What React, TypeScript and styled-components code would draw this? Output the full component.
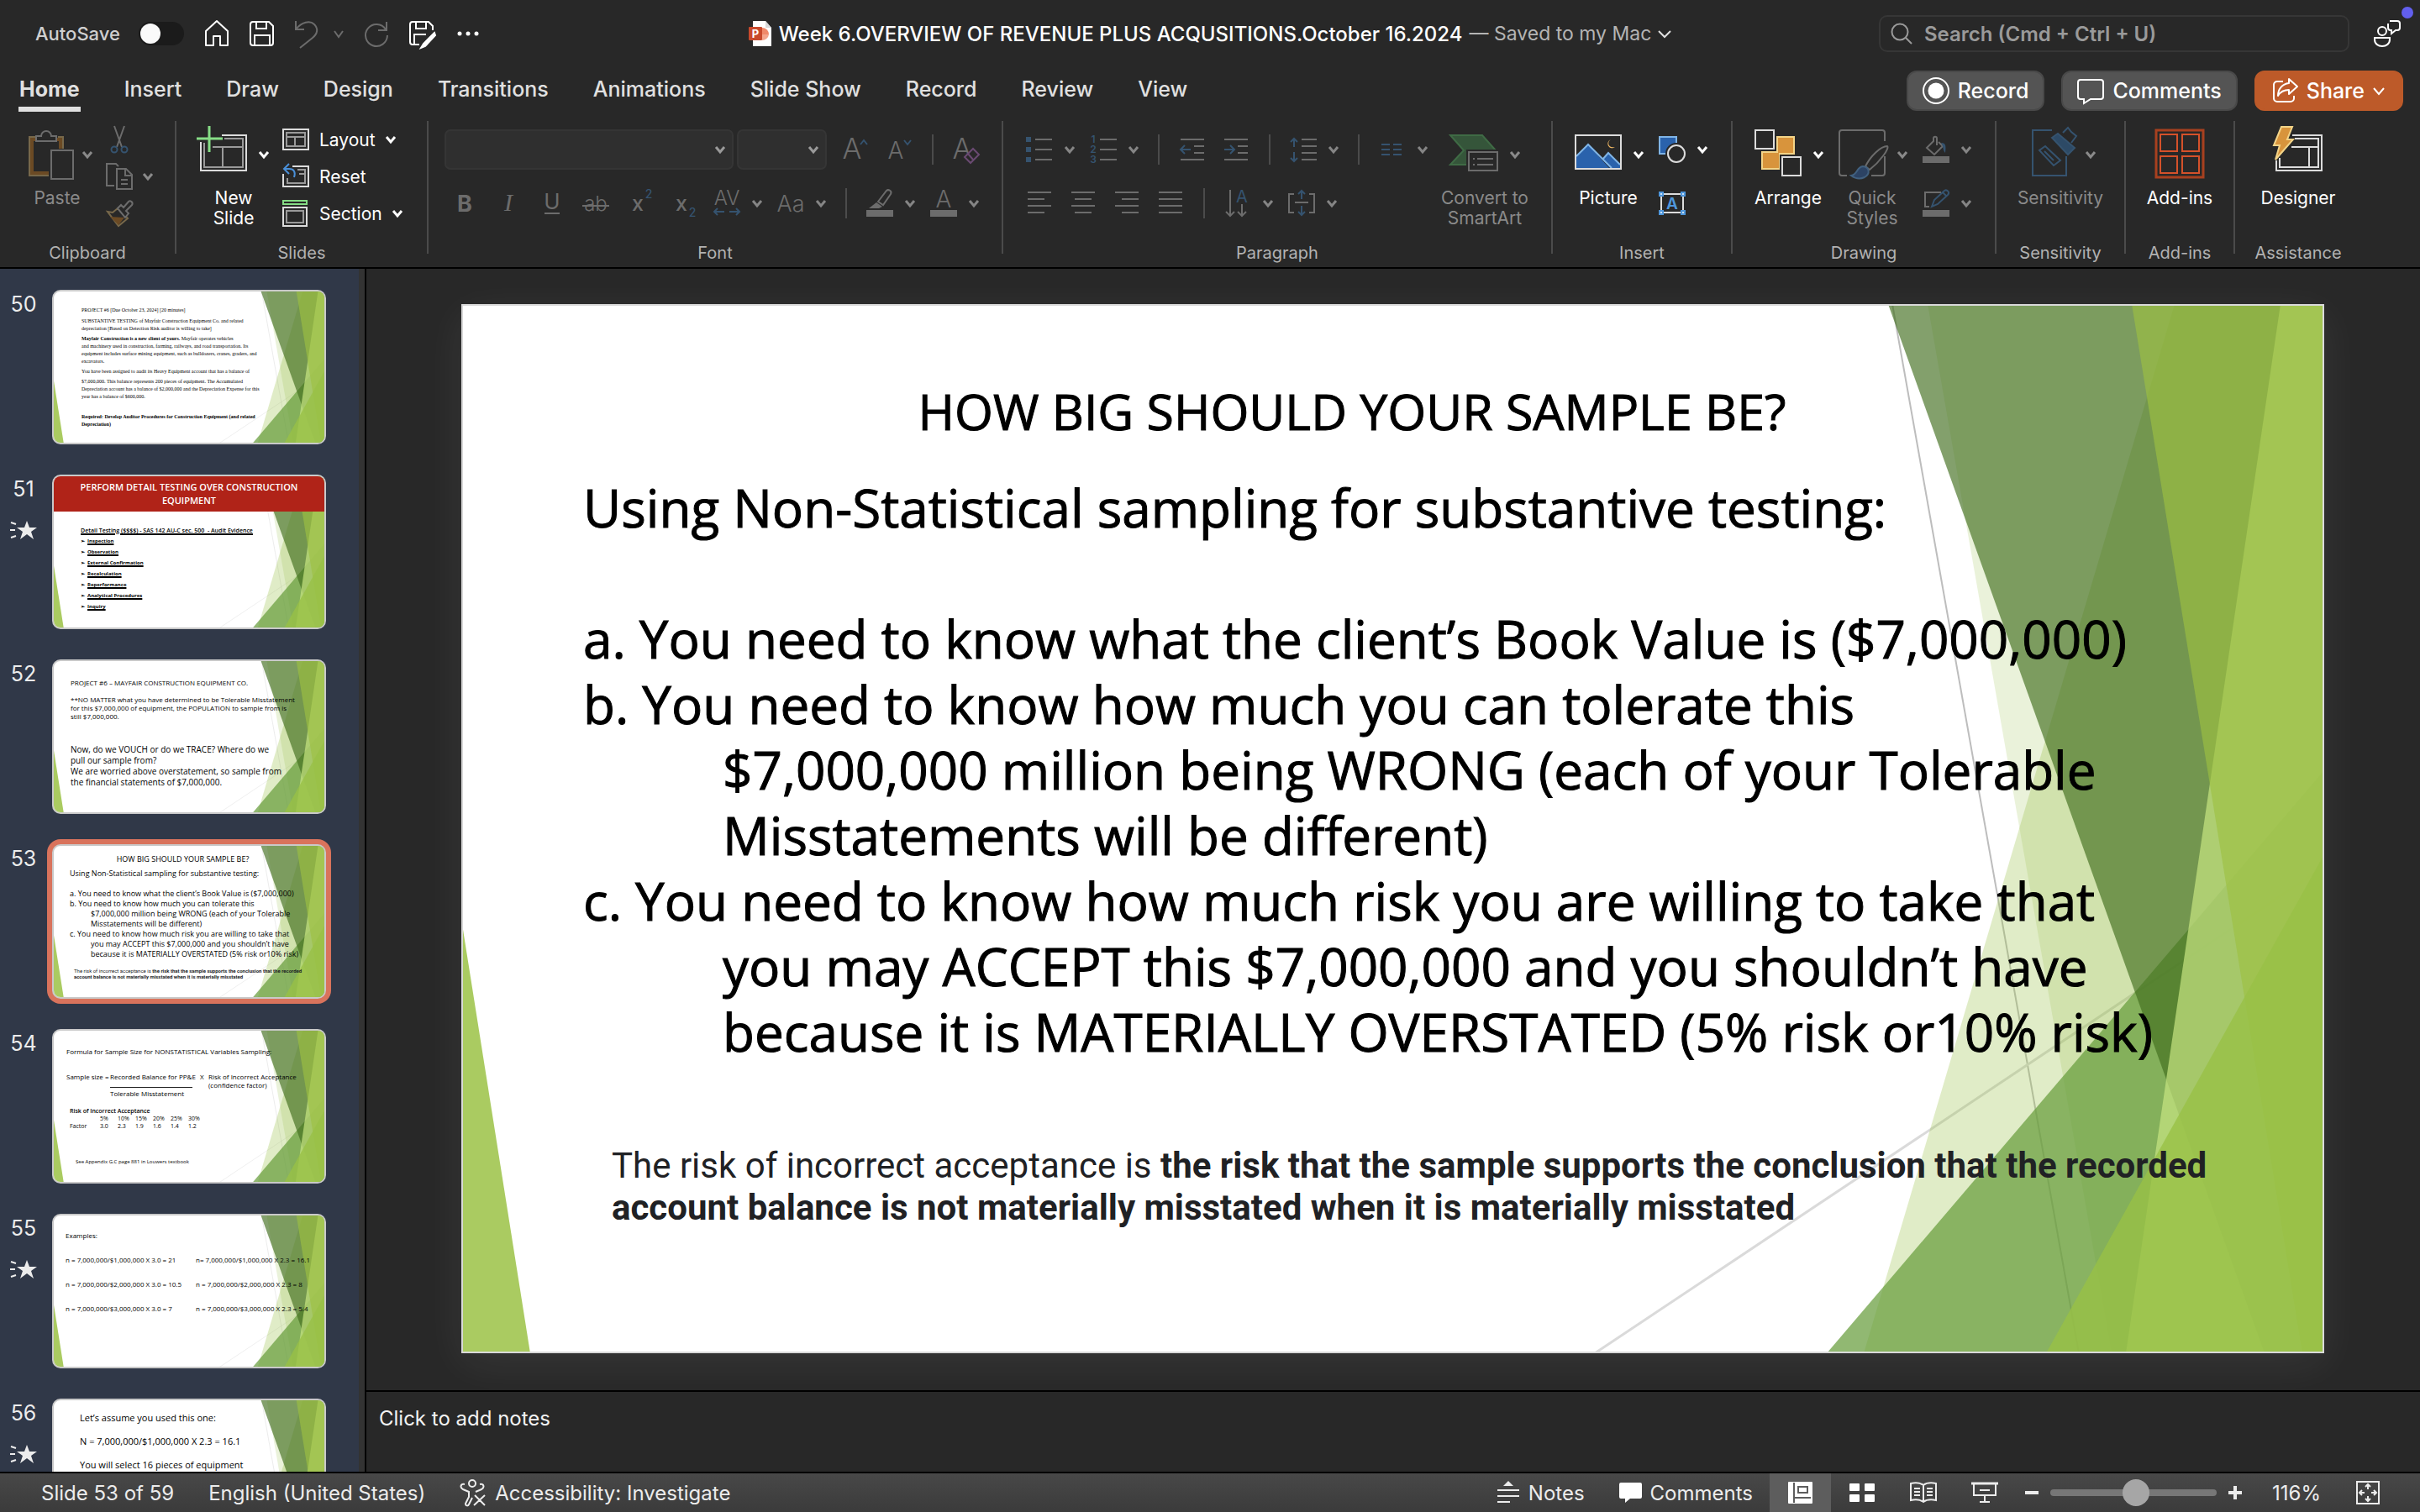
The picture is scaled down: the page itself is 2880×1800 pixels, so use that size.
import React from "react";
import styled, { createGlobalStyle, css } from "styled-components";

const ui = `Inter, "Liberation Sans", sans-serif`;
const slideFont = `"Open Sans", "Noto Sans", sans-serif`;

const c = {
  bg: "#282828",
  text: "#e0e0e0",
  label: "#b2b2b2",
  dim: "#8a8a8a",
  line: "#6c6c6c",
  soft: "#9a9a9a",
  white: "#dcdcdc",
  blueDim: "#35536f",
  rule: "#4b4b4b",
};

const GlobalStyle = createGlobalStyle`
  *, *::before, *::after { box-sizing: border-box; }
  body { margin: 0; background: ${c.bg}; color: ${c.text}; font-family: ${ui}; }
  button, input, select, textarea { font-family: inherit; color: inherit; margin: 0; }
  button { background: none; border: 0; padding: 0; }
  svg { display: block; overflow: visible; flex: none; }
  h1, h2, p, ol, ul { margin: 0; padding: 0; font-weight: inherit; }
  ol, ul { list-style: none; }
`;

const Shell = styled.div`
  height: 100vh;
  display: grid;
  grid-template-rows: auto auto auto minmax(0, 1fr) auto;
`;

/* ---------- title bar ---------- */
const TitleBar = styled.header`
  height: 80px;
  padding: 0 22px;
  display: grid;
  grid-template-columns: 1fr auto 1fr;
  align-items: center;
`;
const QuickAccess = styled.div`
  display: flex;
  align-items: center;
  gap: 24px;
  padding-left: 20px;
`;
const AutoSave = styled.label`
  display: flex;
  align-items: center;
  gap: 22px;
  font-size: 22px;
  font-weight: 500;
  color: #cfcfcf;
`;
const Toggle = styled.input`
  appearance: none;
  width: 54px;
  height: 28px;
  border-radius: 14px;
  background: #1b1b1b;
  padding: 2px;
  &::before {
    content: "";
    display: block;
    width: 24px;
    height: 24px;
    border-radius: 50%;
    background: #fafafa;
  }
`;
const IconButton = styled.button<{ $dim?: boolean }>`
  display: flex;
  align-items: center;
  gap: 18px;
  color: ${(p) => (p.$dim ? c.line : "#fff")};
`;
const DocTitle = styled.div`
  display: flex;
  align-items: center;
  gap: 8px;
  font-size: 24px;
  white-space: nowrap;
`;
const DocName = styled.h1`
  font-size: 24px;
  font-weight: 500;
  color: #fff;
`;
const DocState = styled.span`
  font-size: 23px;
  color: #b4b4b4;
`;
const TitleRight = styled.div`
  display: flex;
  justify-content: flex-end;
  align-items: center;
  gap: 28px;
`;
const SearchBox = styled.label`
  flex: 0 1 560px;
  height: 44px;
  padding: 0 12px;
  display: flex;
  align-items: center;
  gap: 14px;
  border: 2px solid #363636;
  border-radius: 10px;
  color: ${c.soft};
`;
const SearchInput = styled.input`
  flex: 1;
  min-width: 0;
  border: 0;
  padding: 0;
  background: none;
  font-size: 24px;
  font-weight: 600;
  &::placeholder {
    color: ${c.soft};
    opacity: 1;
  }
`;
const Presence = styled.button`
  position: relative;
  color: #fff;
`;
const PresenceDot = styled.span`
  position: absolute;
  top: -16px;
  right: -14px;
  width: 14px;
  height: 14px;
  border-radius: 50%;
  background: #625fee;
`;

/* ---------- tabs ---------- */
const TabRow = styled.div`
  height: 56px;
  padding: 0 20px 0 22px;
  display: flex;
  justify-content: space-between;
  align-items: center;
`;
const Tabs = styled.nav`
  display: flex;
  gap: 51px;
`;
const Tab = styled.a<{ $on?: boolean }>`
  padding: 8px 1px 6px;
  font-size: 25px;
  line-height: 30px;
  font-weight: ${(p) => (p.$on ? 700 : 500)};
  color: ${c.text};
  text-decoration: none;
  border-bottom: 6px solid transparent;
  ${(p) =>
    p.$on &&
    css`
      border-color: #e0e0e0;
    `}
`;
const Actions = styled.div`
  display: flex;
  gap: 20px;
`;
const Action = styled.button<{ $primary?: boolean }>`
  height: 48px;
  padding: 0 ${(p) => (p.$primary ? 20 : 17)}px;
  display: flex;
  align-items: center;
  gap: 10px;
  border: 2px solid ${(p) => (p.$primary ? "#bd5a29" : "#494949")};
  border-radius: 12px;
  background: ${(p) => (p.$primary ? "#bd5a29" : "#545454")};
  color: #fff;
  font-size: 25px;
  font-weight: 500;
`;

/* ---------- ribbon ---------- */
const RibbonBar = styled.section`
  height: 184px;
  padding-top: 8px;
  display: flex;
  align-items: flex-start;
  border-bottom: 2px solid #000;
`;
const Group = styled.div<{ $w: number }>`
  min-width: ${(p) => p.$w}px;
  height: 158px;
  border-right: 2px solid ${c.rule};
  display: flex;
  flex-direction: column;
  justify-content: space-between;
  &:last-child {
    border-right-color: transparent;
  }
`;
const GroupBody = styled.div<{ $left?: number; $gap?: number; $center?: boolean }>`
  display: flex;
  padding-left: ${(p) => p.$left ?? 0}px;
  gap: ${(p) => p.$gap ?? 0}px;
  justify-content: ${(p) => (p.$center ? "center" : "flex-start")};
`;
const GroupLabel = styled.div`
  font-size: 20px;
  line-height: 24px;
  margin-bottom: -11px;
  text-align: center;
  color: ${c.label};
`;
const BigButton = styled.button<{ $dim?: boolean }>`
  min-width: 100px;
  display: flex;
  flex-direction: column;
  align-items: center;
  color: ${(p) => (p.$dim ? c.dim : "#fff")};
  font-size: 21px;
  line-height: 24px;
`;
const BigIcon = styled.span`
  height: 80px;
  display: flex;
  align-items: center;
  gap: 12px;
`;
const Stack = styled.div`
  display: grid;
  grid-auto-rows: 44px;
`;
const RowButton = styled.button<{ $dim?: boolean }>`
  display: flex;
  align-items: center;
  gap: 12px;
  color: ${(p) => (p.$dim ? c.dim : "#fff")};
  font-size: 21px;
`;
const Rows = styled.div`
  padding-top: 10px;
  display: grid;
  grid-auto-rows: 48px;
  row-gap: 16px;
`;
const ToolRow = styled.div<{ $left?: number }>`
  display: flex;
  align-items: center;
  gap: 18px;
  padding-left: ${(p) => p.$left ?? 0}px;
`;
const Cluster = styled.div<{ $gap: number }>`
  display: flex;
  align-items: center;
  gap: ${(p) => p.$gap}px;
`;
const ToolButton = styled.button`
  display: flex;
  align-items: center;
  gap: 14px;
  color: ${c.line};
`;
const Divider = styled.span`
  width: 2px;
  height: 36px;
  margin: 0 5px;
  background: ${c.rule};
`;
const Combo = styled.span<{ $w: number }>`
  width: ${(p) => p.$w}px;
  height: 48px;
  padding-right: 8px;
  display: grid;
  align-items: center;
  justify-items: end;
  border: 2px solid #353535;
  border-radius: 7px;
  background: #2f2f2f;
  color: ${c.soft};
  & > * {
    grid-area: 1 / 1;
  }
`;
const ComboSelect = styled.select`
  appearance: none;
  width: 100%;
  height: 100%;
  border: 0;
  background: none;
`;

/* ---------- workspace ---------- */
const Workspace = styled.div`
  display: grid;
  grid-template-columns: 436px minmax(0, 1fr);
  min-height: 0;
`;
const Sidebar = styled.aside`
  overflow: hidden;
  background: #303848;
  border-right: 2px solid #000;
  box-shadow: inset -7px 0 0 #333;
`;
const ThumbList = styled.ol`
  padding: 25px 0 0 8px;
  display: flex;
  flex-direction: column;
  gap: 36px;
`;
const ThumbItem = styled.li`
  display: grid;
  grid-template-columns: 40px 326px;
  column-gap: 14px;
`;
const ThumbMeta = styled.div`
  display: flex;
  flex-direction: column;
  align-items: center;
  gap: 20px;
  color: #ececec;
  font-size: 25px;
  line-height: 34px;
`;
const Thumb = styled.a<{ $on?: boolean }>`
  height: 184px;
  display: grid;
  overflow: hidden;
  border: 2px solid #c9c9c9;
  border-radius: 10px;
  background: #fff;
  color: #000;
  text-decoration: none;
  font-family: ${slideFont};
  box-shadow: ${(p) => (p.$on ? "0 0 0 6px #d9735c" : "none")};
  & > * {
    grid-area: 1 / 1;
    min-width: 0;
  }
`;
const Layer = styled.div<{ $x?: number; $y?: number; $size?: number; $lh?: number; $family?: string }>`
  z-index: 1;
  padding: ${(p) => p.$y ?? 0}px 0 0 ${(p) => p.$x ?? 0}px;
  font-size: ${(p) => p.$size ?? 8}px;
  line-height: ${(p) => p.$lh ?? 10}px;
  ${(p) => p.$family && `font-family: ${p.$family};`}
  white-space: pre;
`;
const Para = styled.p<{ $top?: number; $left?: number; $size?: number; $lh?: number; $bold?: boolean }>`
  margin-top: ${(p) => p.$top ?? 0}px;
  padding-left: ${(p) => p.$left ?? 0}px;
  ${(p) => p.$size && `font-size: ${p.$size}px;`}
  ${(p) => p.$lh && `line-height: ${p.$lh}px;`}
  font-weight: ${(p) => (p.$bold ? 700 : "inherit")};
`;
const RedHeader = styled.div`
  height: 42px;
  padding-top: 5px;
  background: #b02318;
  color: #fff;
  font-size: 11px;
  line-height: 16px;
  font-weight: 600;
  text-align: center;
`;
const TopicList = styled.ul`
  padding: 16px 0 0 32px;
  font-size: 6px;
  line-height: 13px;
  font-weight: 700;
`;
const Topic = styled.li<{ $head?: boolean }>`
  ${(p) => p.$head && "font-size: 7px; font-weight: 600;"}
  display: flex;
  gap: 3px;
`;
const Underlined = styled.span`
  text-decoration: underline 2px;
  text-underline-offset: 1px;
`;
const Formula = styled.div`
  margin-top: 20px;
  display: grid;
  grid-template-columns: 52px 107px 10px auto;
`;
const Fraction = styled.span`
  display: grid;
  justify-items: start;
`;
const FractionBar = styled.span`
  width: 98px;
  height: 8px;
  margin-bottom: 2px;
  border-bottom: 1px solid #222;
`;
const FactorTable = styled.table`
  margin: 11px 0 0 4px;
  border-collapse: collapse;
  font-size: 7px;
  line-height: 9px;
  tr {
    height: 9px;
  }
  td,
  th {
    padding: 0;
    width: 21px;
    text-align: left;
    font-weight: 400;
  }
  th:first-child {
    width: 36px;
  }
  caption {
    text-align: left;
    font-weight: 600;
  }
`;
const Pairs = styled.div`
  display: grid;
  grid-template-columns: 155px auto;
`;

const MainArea = styled.main`
  display: grid;
  grid-template-rows: minmax(0, 1fr) auto;
  min-height: 0;
`;
const Stage = styled.div`
  padding: 42px 114px 0 113px;
  overflow: hidden;
`;
const Slide = styled.article`
  width: 100%;
  aspect-ratio: 2217 / 1249;
  display: grid;
  overflow: hidden;
  background: #fff;
  color: #000;
  font-family: ${slideFont};
  outline: 2px solid #d9d9d9;
  outline-offset: -2px;
  box-shadow: 0 12px 48px rgba(255, 255, 255, 0.07);
  & > * {
    grid-area: 1 / 1;
    min-width: 0;
    min-height: 0;
  }
`;
const SlideText = styled.div`
  z-index: 1;
  padding: 88px 0 0 145px;
  font-size: 62px;
  line-height: 78px;
  white-space: pre;
`;
const SlideTitle = styled.h2`
  width: 1830px;
  font-size: 59px;
  text-align: center;
  -webkit-text-stroke: 1px #000;
`;
const SlideBody = styled.div`
  margin-top: 37px;
  -webkit-text-stroke: 1px #000;
`;
const SlideLine = styled.p<{ $indent?: boolean }>`
  min-height: 78px;
  padding-left: ${(p) => (p.$indent ? 166 : 0)}px;
`;
const Footnote = styled.p`
  margin: 96px 0 0 34px;
  font-family: Roboto, sans-serif;
  font-size: 42px;
  line-height: 50px;
  color: #202124;
`;
const Notes = styled.textarea`
  display: block;
  width: 100%;
  height: 97px;
  padding: 16px 15px;
  border: 0;
  border-top: 2px solid #000;
  resize: none;
  background: ${c.bg};
  font-size: 24px;
  line-height: 32px;
  &::placeholder {
    color: #f2f2f2;
    opacity: 1;
  }
`;

/* ---------- status bar ---------- */
const StatusBar = styled.footer`
  height: 48px;
  display: flex;
  justify-content: space-between;
  align-items: stretch;
  border-top: 2px solid #000;
  background: linear-gradient(#484848, #3b3b3b);
  font-size: 24px;
  color: #ececec;
`;
const StatusSide = styled.div<{ $left?: boolean }>`
  display: flex;
  align-items: center;
  gap: ${(p) => (p.$left ? 41 : 0)}px;
  padding: ${(p) => (p.$left ? "0 0 0 49px" : "0 48px 0 0")};
  white-space: nowrap;
`;
const StatusButton = styled.button<{ $right?: number }>`
  height: 100%;
  display: flex;
  align-items: center;
  gap: 10px;
  margin-right: ${(p) => p.$right ?? 0}px;
  font-size: 24px;
`;
const ViewButton = styled.button<{ $on?: boolean }>`
  width: 73px;
  height: 100%;
  display: grid;
  place-items: center;
  background: ${(p) => (p.$on ? "#5d5d5d" : "none")};
`;
const Zoom = styled.div`
  display: flex;
  align-items: center;
  gap: 14px;
  margin-left: 12px;
`;
const ZoomRange = styled.input`
  appearance: none;
  width: 198px;
  height: 32px;
  background: none;
  &::-webkit-slider-runnable-track {
    height: 8px;
    border-radius: 4px;
    background: #777;
  }
  &::-webkit-slider-thumb {
    appearance: none;
    width: 32px;
    height: 32px;
    margin-top: -12px;
    border-radius: 50%;
    background: #a6a6a6;
  }
`;
const ZoomValue = styled.button`
  margin: 0 42px 0 36px;
  font-size: 24px;
`;

/* ---------- icons ---------- */
type SvgProps = { w?: number; h?: number; sw?: number; children: React.ReactNode };
const Svg = ({ w = 32, h = 32, sw = 2, children }: SvgProps) => (
  <svg width={w} height={h} viewBox={`0 0 ${w} ${h}`} fill="none" stroke="currentColor" strokeWidth={sw} aria-hidden="true">
    {children}
  </svg>
);
const Big = ({ children }: { children: React.ReactNode }) => (
  <Svg w={60} h={64}>{children}</Svg>
);
const Chevron = ({ color }: { color?: string }) => (
  <Svg w={12} h={8} sw={3}>
    <path d="M1 1l5 6 5-6" stroke={color ?? "currentColor"} />
  </Svg>
);
const ThinChevron = ({ w = 14 }: { w?: number }) => (
  <Svg w={w} h={9} sw={2}>
    <path d={`M1 1l${w / 2 - 1} 7 ${w / 2 - 1}-7`} />
  </Svg>
);
const Glyph = ({ x = 16, y = 24, size = 22, fill = "currentColor", weight = 400, style = "normal", family = ui, children }: any) => (
  <text x={x} y={y} fontSize={size} fill={fill} stroke="none" textAnchor="middle" fontWeight={weight} fontStyle={style} fontFamily={family}>
    {children}
  </text>
);

const HomeIcon = () => (
  <Svg w={30} h={32}><path d="M2 13L15 1l13 12v17H19V19h-8v11H2z" strokeLinejoin="round" /></Svg>
);
const SaveIcon = () => (
  <Svg w={30} h={30}>
    <path d="M4 1h19l5 5v20a3 3 0 0 1-3 3H4a3 3 0 0 1-3-3V4a3 3 0 0 1 3-3z" />
    <path d="M8 1v8h12V1M6 29V17h18v12" />
  </Svg>
);
const SaveEditIcon = () => (
  <Svg w={32} h={32}>
    <path d="M12 29H4a3 3 0 0 1-3-3V5a3 3 0 0 1 3-3h19l5 5v5" />
    <path d="M8 2v8h12V2M6 29V17h14" />
    <path d="M30 15l-13 13-3 5 5-2 12-13z" fill="#fff" />
  </Svg>
);
const UndoIcon = () => (
  <Svg w={28} h={32}><path d="M1 1v10h10M1 11C8 2 18 0 23 5s4 11-2 16L6 33" /></Svg>
);
const RedoIcon = () => (
  <Svg w={30} h={30}><path d="M27 1v10H17M26 10A13 13 0 1 0 28 17" /></Svg>
);
const DotsIcon = () => (
  <Svg w={28} h={8}>
    {[4, 14, 24].map((x) => <circle key={x} cx={x} cy={4} r={2.5} fill="#fff" stroke="none" />)}
  </Svg>
);
const PptIcon = () => (
  <Svg w={28} h={30}>
    <path d="M5 0h15l7 8v22H5z" fill="#fff" stroke="none" />
    <path d="M20 0l7 8h-7z" fill="#d8d8d8" stroke="none" />
    <path d="M16 8a8 8 0 0 1 8 8h-8z" fill="#f0896a" stroke="none" />
    <path d="M24 16a8 8 0 0 1-8 7v-7z" fill="#f4a58c" stroke="none" />
    <rect x={0} y={7} width={16} height={16} rx={1} fill="#c8492c" stroke="none" />
    <Glyph x={8} y={20} size={13} weight={700} fill="#fff">P</Glyph>
  </Svg>
);
const SearchIcon = () => (
  <Svg w={26} h={26}><circle cx={11} cy={11} r={9.5} /><path d="M18 18l7 7" /></Svg>
);
const PresenceIcon = () => (
  <Svg w={34} h={32}>
    <circle cx={11} cy={13} r={5} />
    <path d="M2 21h18v2c0 5-4 8-9 8s-9-3-9-8z" />
    <path d="M20 1h9a3 3 0 0 1 3 3v5a3 3 0 0 1-3 3h-2l-5 4v-4h-1a3 3 0 0 1-3-3V4" />
  </Svg>
);
const RecordIcon = () => (
  <Svg><circle cx={16} cy={16} r={15} /><circle cx={16} cy={16} r={9.5} fill="#fff" stroke="none" /></Svg>
);
const CommentIcon = () => (
  <Svg><path d="M4 3h24a3 3 0 0 1 3 3v17a3 3 0 0 1-3 3H16l-8 5v-5H4a3 3 0 0 1-3-3V6a3 3 0 0 1 3-3z" /></Svg>
);
const ShareIcon = () => (
  <Svg w={30} h={30}>
    <path d="M12 4H5a4 4 0 0 0-4 4v16a4 4 0 0 0 4 4h16a4 4 0 0 0 4-4v-3" />
    <path d="M19 1l10 9-10 9v-5c-6 0-10 2-13 7 0-8 5-14 13-15z" strokeLinejoin="round" />
  </Svg>
);

const PasteIcon = () => (
  <Big>
    <path d="M17 13H11V55H32M43 13h4v12" stroke="#77684a" strokeWidth={6} />
    <path d="M17 14H12V54H32M42 14h4v11" stroke="#6b4a24" strokeWidth={4} />
    <path d="M17 10h6a6 6 0 0 1 12 0h6v6H17z" fill={c.bg} stroke={c.line} />
    <rect x={35} y={27} width={26} height={34} fill={c.bg} stroke={c.line} />
  </Big>
);
const CutIcon = () => (
  <Svg>
    <path d="M10 0l9 25M22 0l-9 25" stroke={c.line} />
    <circle cx={10} cy={28} r={3.5} stroke={c.blueDim} />
    <circle cx={22} cy={28} r={3.5} stroke={c.blueDim} />
  </Svg>
);
const CopyIcon = () => (
  <Svg>
    <path d="M10 27H1V1h11l3 3" stroke={c.line} />
    <path d="M13 7h11l7 7v17H13zM23 7v8h8M18 20h8M18 25h8" stroke={c.line} />
  </Svg>
);
const PainterIcon = () => (
  <Svg>
    <path d="M2 14l6 1 6-5 12 12-11 9z" stroke="#77684a" />
    <path d="M5 20l17 1-7 9z" fill="#6b4a24" stroke="none" />
    <path d="M14 10l4-4 3 3 6-7c2-2 6 1 4 4l-7 7 3 3-4 5z" fill={c.bg} stroke={c.line} />
  </Svg>
);
const NewSlideIcon = () => (
  <Big>
    <path d="M28 9H57V51H3V17" stroke={c.white} />
    <path d="M31 13H53V47H7V18M17 23H53M29 23V47" stroke={c.soft} />
    <path d="M13 -2V29M-2 13H29" stroke="#86dd86" strokeWidth={3} />
  </Big>
);
const LayoutIcon = () => (
  <Svg>
    <rect x={1} y={4} width={30} height={24} stroke={c.white} />
    <path d="M5 8h22v16H5zM5 13h22M15 13v11" stroke={c.soft} />
  </Svg>
);
const ResetIcon = () => (
  <Svg>
    <path d="M12 4H31V28H1V13" stroke={c.white} />
    <path d="M18 8h9v16H6v-6M20 13h7" stroke={c.soft} />
    <path d="M8 1L2 7l6 6M2 7h6c6 0 8 4 6 10" stroke="#4a90d9" />
  </Svg>
);
const SectionIcon = () => (
  <Svg>
    <rect x={1} y={1} width={28} height={4} stroke="#86dd86" />
    <rect x={1} y={9} width={28} height={22} stroke={c.white} />
    <rect x={5} y={13} width={20} height={14} stroke={c.soft} />
  </Svg>
);
const GrowIcon = () => (
  <Svg><Glyph x={12} y={27} size={34} weight={300}>A</Glyph><path d="M22 10l4-5 4 5" stroke={c.blueDim} /></Svg>
);
const ShrinkIcon = () => (
  <Svg><Glyph x={12} y={27} size={28} weight={300}>A</Glyph><path d="M22 5l4 5 4-5" stroke={c.blueDim} /></Svg>
);
const ClearIcon = () => (
  <Svg>
    <Glyph x={11} y={27} size={34} weight={300}>A</Glyph>
    <path d="M14 25l10-10 7 7-10 10z M18 21l6 7" fill={c.bg} stroke="#6a4a72" />
  </Svg>
);
const CharSpaceIcon = () => (
  <Svg>
    <Glyph x={16} y={18} size={24} weight={300}>AV</Glyph>
    <path d="M1 26h12M19 26h12M5 22l-4 4 4 4M27 22l4 4-4 4" stroke={c.blueDim} />
  </Svg>
);
const HighlightIcon = () => (
  <Svg>
    <path d="M14 14L24 1c2-2 7 0 5 4L20 18z" stroke={c.line} />
    <path d="M12 15l7 5-4 2H3z" fill={c.line} stroke="none" />
    <rect x={0} y={24} width={32} height={8} fill={c.line} stroke="none" />
  </Svg>
);
const FontColorIcon = () => (
  <Svg>
    <Glyph x={16} y={21} size={28} weight={300}>A</Glyph>
    <rect x={0} y={24} width={32} height={8} fill={c.line} stroke="none" />
  </Svg>
);
const BulletsIcon = () => (
  <Svg>
    <path d="M11 4h20M11 16h20M11 28h20" />
    {[1, 13, 25].map((y) => <rect key={y} x={0} y={y} width={6} height={6} fill={c.blueDim} stroke="none" />)}
  </Svg>
);
const NumbersIcon = () => (
  <Svg>
    <path d="M12 4h20M12 16h20M12 28h20" />
    {[1, 2, 3].map((n) => <Glyph key={n} x={4} y={n * 12 - 4} size={12} weight={600} fill={c.blueDim}>{n}</Glyph>)}
  </Svg>
);
const IndentIcon = ({ out }: { out?: boolean }) => (
  <Svg>
    <path d="M2 4h28M18 12h12M18 20h12M2 28h28" />
    <path d={out ? "M2 16h12M7 11l-5 5 5 5" : "M2 16h12M9 11l5 5-5 5"} stroke={c.blueDim} />
  </Svg>
);
const SpacingIcon = () => (
  <Svg>
    <path d="M14 4h18M14 12h18M14 20h18M14 28h18" />
    <path d="M5 3v10M5 19v11M1 7l4-4 4 4M1 26l4 4 4-4" stroke={c.blueDim} />
  </Svg>
);
const ColumnsIcon = () => (
  <Svg><path d="M3 10h10M17 10h10M3 16h10M17 16h10M3 22h10M17 22h10" stroke={c.blueDim} /></Svg>
);
const AlignIcon = ({ kind }: { kind: "l" | "c" | "r" | "j" }) => {
  const short = { l: "M2 11h20M2 27h20", c: "M6 11h20M6 27h20", r: "M10 11h20M10 27h20", j: "M2 11h28M2 27h28" }[kind];
  return <Svg><path d={`M2 3h28M2 19h28${short}`} /></Svg>;
};
const DirectionIcon = () => (
  <Svg>
    <path d="M7 0v31M2 26l5 5 5-5M21 17v14M16 26l5 5 5-5" />
    <Glyph x={21} y={15} size={20} fill={c.blueDim}>A</Glyph>
  </Svg>
);
const AlignTextIcon = () => (
  <Svg>
    <path d="M7 5H1v22h6M25 5h6v22h-6M8 15h16" />
    <path d="M16 1v10M16 19v11M12 5l4-4 4 4M12 26l4 4 4-4" stroke={c.blueDim} />
  </Svg>
);
const SmartArtIcon = () => (
  <Big>
    <path d="M1 9h38l16 18-16 17H1l16-17z" fill="#35553a" stroke="#3f6b45" />
    <rect x={20} y={26} width={40} height={30} fill={c.bg} stroke="none" />
    <rect x={23} y={29} width={34} height={22} stroke={c.line} />
    <path d="M33 37h19M33 44h19M28 37h2M28 44h2" stroke={c.line} />
  </Big>
);
const PictureIcon = () => (
  <Big>
    <path d="M4 48V33L18 20l25 28z" fill="#2a62ac" stroke="none" />
    <path d="M35 38l7-8 14 14v4H44z" fill="#2a62ac" stroke="none" />
    <path d="M4 34L18 20l28 28M35 38l7-8 14 14" stroke="#7fb4e6" />
    <path d="M45 14c-5 3-3 11 5 9-6 5-13-5-5-9z" fill="#f0b864" stroke="none" />
    <rect x={3} y={9} width={54} height={40} stroke={c.white} />
  </Big>
);
const ShapesIcon = () => (
  <Svg>
    <rect x={1} y={1} width={20} height={20} fill="#2a62ac" stroke="#7fb4e6" />
    <circle cx={21} cy={21} r={13} fill={c.bg} stroke="none" />
    <circle cx={21} cy={21} r={10} stroke={c.white} />
  </Svg>
);
const TextBoxIcon = () => (
  <Svg>
    <rect x={3} y={5} width={26} height={22} stroke={c.white} />
    <Glyph x={16} y={23} size={19} weight={600} fill="#4f97dc">A</Glyph>
    {[0, 26].map((x) => [2, 24].map((y) => <rect key={`${x}-${y}`} x={x + 1} y={y + 1} width={4} height={4} fill="#c9dff5" stroke="#4f97dc" />))}
  </Svg>
);
const ArrangeIcon = () => (
  <Big>
    <path d="M29 11H49V31H32V49H11V29H29Z" fill="#d8943c" stroke="#f3d488" />
    <rect x={0} y={0} width={28} height={28} fill={c.bg} stroke="none" />
    <rect x={3} y={3} width={22} height={22} stroke={c.white} />
    <rect x={32} y={32} width={28} height={28} fill={c.bg} stroke="none" />
    <rect x={35} y={35} width={22} height={22} stroke={c.white} />
  </Big>
);
const QuickStylesIcon = () => (
  <Big>
    <path d="M12 57H6a3 3 0 0 1-3-3V6a3 3 0 0 1 3-3H54a3 3 0 0 1 3 3V16M57 34V54a3 3 0 0 1-3 3H41" stroke={c.line} />
    <path d="M34 46C40 34 52 22 60 22c3 2-8 18-21 28z" fill={c.bg} stroke={c.line} />
    <path d="M17 57c8-1 6-10 14-11 8 1 9 9 2 13-6 3-12 1-16-2z" fill="#2c4364" stroke="#41607f" />
  </Big>
);
const FillIcon = () => (
  <Svg>
    <path d="M17 11V3c0-3-4-3-4 0v3L5 14l9 8 10-10-5-5" stroke={c.line} />
    <path d="M22 8c6 0 6 4 5 12-3-3-2-8-5-12z" fill={c.blueDim} stroke="none" />
    <rect x={0} y={24} width={32} height={8} fill={c.line} stroke="none" />
  </Svg>
);
const OutlineIcon = () => (
  <Svg>
    <path d="M22 3H3v17h5" stroke={c.line} />
    <path d="M11 20l3-8L26 1c3-2 7 2 4 5L18 17zM24 3l5 5" stroke={c.blueDim} />
    <rect x={0} y={24} width={32} height={8} fill={c.line} stroke="none" />
  </Svg>
);
const SensitivityIcon = () => (
  <Big>
    <path d="M32 3H9V57H49V34" stroke={c.blueDim} />
    <path d="M24 22l-7 5 17 18 8-6z" stroke={c.blueDim} fill={c.bg} />
    <path d="M23 28l11 11" stroke={c.blueDim} />
    <path d="M32 12l7-5 20 17-8 8z" fill="#2d4a66" stroke={c.blueDim} />
    <path d="M45 6l6-6 4 5 6 5-6 8" fill={c.bg} stroke={c.blueDim} />
  </Big>
);
const AddinsIcon = () => (
  <Big>
    <rect x={2} y={3} width={56} height={56} stroke="#a8401f" strokeWidth={3} />
    {[7, 33].map((x) => [8, 34].map((y) => <rect key={`${x}-${y}`} x={x} y={y} width={20} height={20} stroke="#d5512a" />))}
  </Big>
);
const DesignerIcon = () => (
  <Big>
    <path d="M23 9H58V51H4V39" stroke={c.white} />
    <path d="M26 13H54V47H8V36M22 23H54M43 23V47" stroke={c.white} />
    <path d="M10 -1H23L17 14H24L3 38L8 21H1Z" fill="#d8943c" stroke="#f3d488" />
  </Big>
);
const StarIcon = () => (
  <Svg w={32} h={24} sw={2}>
    <path d="M1 3l6 2M0 12h6M1 21l6-2" />
    <path d="M20 1l3 8h9l-7 5 3 9-8-6-8 6 3-9-7-5h9z" fill="#ececec" stroke="none" />
  </Svg>
);
const AccessIcon = () => (
  <Svg>
    <circle cx={15} cy={5} r={4} />
    <path d="M6 6c-5-1-6 4-2 6l7 3v6L7 29c0 3 3 3 4 1l4-8M24 6c5-1 6 4 2 6l-7 3M18 19l12 12M30 19L17 31" />
  </Svg>
);
const NotesIcon = () => (
  <Svg w={28} h={28} sw={2}>
    <path d="M8 6l6-6 6 6z" fill="currentColor" stroke="none" />
    <path d="M1 11h26M1 18h26M1 25h15" />
  </Svg>
);
const StatusCommentIcon = () => (
  <Svg w={27} h={26}><path d="M2 1h23a2 2 0 0 1 2 2v15a2 2 0 0 1-2 2H13l-6 5v-5H2a2 2 0 0 1-2-2V3a2 2 0 0 1 2-2z" fill="#fff" stroke="none" /></Svg>
);
const NormalViewIcon = () => (
  <Svg w={30} h={28}>
    <rect x={0} y={1} width={29} height={26} rx={1} fill="#fff" stroke="none" />
    <path d="M7 2v24M7 20h20" stroke="#5d5d5d" />
    <rect x={12} y={7} width={11} height={7} stroke="#5d5d5d" />
  </Svg>
);
const SorterIcon = () => (
  <Svg w={30} h={24}>
    {[0, 18].map((x) => [1, 14].map((y) => <rect key={`${x}-${y}`} x={x} y={y} width={12} height={9} rx={1} fill="#fff" stroke="none" />))}
  </Svg>
);
const ReadingIcon = () => (
  <Svg w={32} h={26}>
    <path d="M16 4c-4-3-10-3-15-2v20c5-1 11-1 15 2 4-3 10-3 15-2V2c-5-1-11-1-15 2zv20" />
    <path d="M5 8h7M5 12h7M5 16h7M20 8h7M20 12h7M20 16h7" />
  </Svg>
);
const PresentIcon = () => (
  <Svg w={32} h={26}><path d="M0 2h32" strokeWidth={3} /><path d="M3 3v13h26V3M10 10h12M16 16v7M10 24h12" /></Svg>
);
const FitIcon = () => (
  <Svg w={28} h={28}>
    <rect x={1} y={1} width={26} height={26} />
    <path d="M14 4v6M14 18v6M4 14h6M18 14h6M11 7l3-3 3 3M11 21l3 3 3-3M7 11l-3 3 3 3M21 11l3 3-3 3" />
  </Svg>
);

/* Slide theme artwork: two hairlines under a fan of translucent green facets. */
const Backdrop = () => (
  <svg width="100%" height="100%" viewBox="0 0 2217 1249" preserveAspectRatio="none" aria-hidden="true">
    <path d="M1703 0L1925 1249" stroke="#bdbdbd" strokeWidth={2} />
    <path d="M1349 1249L2217 670" stroke="#dadada" strokeWidth={3} />
    <path d="M1669 1249L2039 0H2217V1249Z" fill="#98c044" fillOpacity={0.3} />
    <path d="M1745 0H2217V1249H1964Z" fill="#96c046" fillOpacity={0.2} />
    <path d="M1625 1249L2217 555V1249Z" fill="#669c3c" fillOpacity={0.72} />
    <path d="M1698 0H2217V1249H2146Z" fill="#406d1d" fillOpacity={0.65} />
    <path d="M2165 0H2217V1249H1981Z" fill="#c7e581" fillOpacity={0.7} />
    <path d="M1988 0H2217V1249H2191Z" fill="#9cc042" fillOpacity={0.65} />
    <path d="M1886 1249L2217 655V1249Z" fill="#99c146" fillOpacity={0.8} />
    <path d="M0 732L82 1249H0Z" fill="#aacb61" />
  </svg>
);

/* ---------- slide content ---------- */
const bodyLines: [string, boolean][] = [
  ["Using Non-Statistical sampling for substantive testing:", false],
  ["", false],
  ["a. You need to know what the client’s Book Value is ($7,000,000)", false],
  ["b. You need to know how much you can tolerate this", false],
  ["$7,000,000 million being WRONG (each of your Tolerable", true],
  ["Misstatements will be different)", true],
  ["c. You need to know how much risk you are willing to take that", false],
  ["you may ACCEPT this $7,000,000 and you shouldn’t have", true],
  ["because it is MATERIALLY OVERSTATED (5% risk or10% risk)", true],
];
const FootnoteText = () => (
  <>
    The risk of incorrect acceptance is <b>the risk that the sample supports the conclusion that the recorded{"\n"}
    account balance is not materially misstated when it is materially misstated</b>
  </>
);
const MiniTitle = styled.p`
  width: 269px;
  margin-bottom: 5px;
  font-size: 9px;
  text-align: center;
`;
const MiniLine = styled.p<{ $indent?: boolean }>`
  min-height: 12px;
  padding-left: ${(p) => (p.$indent ? 25 : 0)}px;
`;
const MiniNote = styled.p`
  margin: 10px 0 0 5px;
  font-family: Roboto, sans-serif;
  font-size: 6px;
  line-height: 7px;
  color: #202124;
`;

const Slide50 = () => (
  <Layer $x={33} $y={18} $size={6} $lh={9} $family={`"Liberation Serif", serif`}>
    <Para>PROJECT #6 [Due October 23, 2024] [20 minutes]</Para>
    <Para $top={4}>{"SUBSTANTIVE TESTING of Mayfair Construction Equipment Co. and related\ndepreciation [Based on Detection Risk auditor is willing to take]"}</Para>
    <Para $top={3}><b>Mayfair Construction is a new client of yours.</b> Mayfair operates vehicles</Para>
    <Para>{"and machinery used in construction, farming, railways, and road transportation. Its\nequipment includes surface mining equipment, such as bulldozers, cranes, graders, and\nexcavators."}</Para>
    <Para $top={3}>You have been assigned to audit its Heavy Equipment account that has a balance of</Para>
    <Para $top={3}>{"$7,000,000. This balance represents 200 pieces of equipment. The Accumulated\nDepreciation account has a balance of $2,000,000 and the Depreciation Expense for this\nyear has a balance of $600,000."}</Para>
    <Para $top={15} $bold>{"Required: Develop Auditor Procedures for Construction Equipment (and related\nDepreciation)"}</Para>
  </Layer>
);
const topics = ["Inspection", "Observation", "External Confirmation", "Recalculation", "Reperformance", "Analytical Procedures", "Inquiry"];
const Slide51 = () => (
  <Layer>
    <RedHeader>{"PERFORM DETAIL TESTING OVER CONSTRUCTION\nEQUIPMENT"}</RedHeader>
    <TopicList>
      <Topic $head><Underlined>{"Detail Testing ($$$$) - SAS 142 AU-C sec. 500  - Audit Evidence"}</Underlined></Topic>
      {topics.map((t) => <Topic key={t}>➢<Underlined>{t}</Underlined></Topic>)}
    </TopicList>
  </Layer>
);
const Slide52 = () => (
  <Layer $x={20} $y={21} $size={8} $lh={10}>
    <Para>PROJECT #6 – MAYFAIR CONSTRUCTION EQUIPMENT CO.</Para>
    <Para $top={10}>{"**NO MATTER what you have determined to be Tolerable Misstatement\nfor this $7,000,000 of equipment, the POPULATION to sample from is\nstill $7,000,000."}</Para>
    <Para $top={28} $size={10} $lh={13}>{"Now, do we VOUCH or do we TRACE? Where do we\npull our sample from?\nWe are worried above overstatement, so sample from\nthe financial statements of $7,000,000."}</Para>
  </Layer>
);
const Slide53 = () => (
  <Layer $x={19} $y={10} $size={9} $lh={12}>
    <MiniTitle>HOW BIG SHOULD YOUR SAMPLE BE?</MiniTitle>
    {bodyLines.map(([t, indent], i) => <MiniLine key={i} $indent={indent}>{t}</MiniLine>)}
    <MiniNote><FootnoteText /></MiniNote>
  </Layer>
);
const factors = [["5%", "3.0"], ["10%", "2.3"], ["15%", "1.9"], ["20%", "1.6"], ["25%", "1.4"], ["30%", "1.2"]];
const Slide54 = () => (
  <Layer $x={15} $y={20} $size={8} $lh={10}>
    <Para>Formula for Sample Size for NONSTATISTICAL Variables Sampling:</Para>
    <Formula>
      <span>Sample size =</span>
      <Fraction>
        <span>Recorded Balance for PP&amp;E</span>
        <FractionBar />
        <span>Tolerable Misstatement</span>
      </Fraction>
      <span>X</span>
      <span>{"Risk of Incorrect Acceptance\n(confidence factor)"}</span>
    </Formula>
    <FactorTable>
      <caption>Risk of Incorrect Acceptance</caption>
      <tbody>
        <tr><th scope="row" aria-label="Risk" />{factors.map(([p]) => <td key={p}>{p}</td>)}</tr>
        <tr><th scope="row">Factor</th>{factors.map(([p, f]) => <td key={p}>{f}</td>)}</tr>
      </tbody>
    </FactorTable>
    <Para $top={33} $left={11} $size={6}>See Appendix G.C page 881 in Louwers textbook</Para>
  </Layer>
);
const Slide55 = () => (
  <Layer $x={14} $y={9} $size={8} $lh={29}>
    <Para>Examples:</Para>
    <Pairs>
      <span>{"n = 7,000,000/$1,000,000 X 3.0 = 21"}</span>
      <span>{"n= 7,000,000/$1,000,000 X 2.3 = 16.1"}</span>
      <span>{"n = 7,000,000/$2,000,000 X 3.0 = 10.5"}</span>
      <span>{"n = 7,000,000/$2,000,000 X 2.3 = 8"}</span>
      <span>{"n = 7,000,000/$3,000,000 X 3.0 = 7"}</span>
      <span>{"n = 7,000,000/$3,000,000 X 2.3 = 5.4"}</span>
    </Pairs>
  </Layer>
);
const Slide56 = () => (
  <Layer $x={31} $y={7} $size={11} $lh={28}>
    <Para>Let’s assume you used this one:</Para>
    <Para>{"N = 7,000,000/$1,000,000 X 2.3 = 16.1"}</Para>
    <Para>You will select 16 pieces of equipment</Para>
  </Layer>
);
const thumbs = [
  { n: 50, Body: Slide50, star: false },
  { n: 51, Body: Slide51, star: true },
  { n: 52, Body: Slide52, star: false },
  { n: 53, Body: Slide53, star: false },
  { n: 54, Body: Slide54, star: false },
  { n: 55, Body: Slide55, star: true },
  { n: 56, Body: Slide56, star: true },
];

/* ---------- small composites ---------- */
const BigTool = ({ icon, label, dim, menu = true }: { icon: React.ReactNode; label: string[]; dim?: boolean; menu?: boolean }) => (
  <BigButton $dim={dim}>
    <BigIcon>{icon}{menu && <Chevron />}</BigIcon>
    {label.map((l) => <span key={l}>{l}</span>)}
  </BigButton>
);
const Tool = ({ icon, name, menu }: { icon: React.ReactNode; name: string; menu?: boolean | string }) => (
  <ToolButton aria-label={name}>
    {icon}
    {menu && <Chevron color={typeof menu === "string" ? menu : "#858585"} />}
  </ToolButton>
);
const LetterIcon = (p: any) => <Svg><Glyph {...p} /></Svg>;

const Ribbon = () => (
  <RibbonBar aria-label="Home ribbon">
    <Group $w={210}>
      <GroupBody $left={18} $gap={8}>
        <BigTool dim icon={<PasteIcon />} label={["Paste"]} />
        <Stack>
          <RowButton $dim aria-label="Cut"><CutIcon /></RowButton>
          <RowButton $dim aria-label="Copy"><CopyIcon /><Chevron /></RowButton>
          <RowButton $dim aria-label="Format painter"><PainterIcon /></RowButton>
        </Stack>
      </GroupBody>
      <GroupLabel>Clipboard</GroupLabel>
    </Group>
    <Group $w={300}>
      <GroupBody $left={18} $gap={8}>
        <BigTool icon={<NewSlideIcon />} label={["New", "Slide"]} />
        <Stack>
          <RowButton><LayoutIcon />Layout<Chevron /></RowButton>
          <RowButton><ResetIcon />Reset</RowButton>
          <RowButton><SectionIcon />Section<Chevron /></RowButton>
        </Stack>
      </GroupBody>
      <GroupLabel>Slides</GroupLabel>
    </Group>
    <Group $w={684}>
      <Rows>
        <ToolRow $left={19}>
          <Cluster $gap={4}>
            <Combo $w={344}><ComboSelect aria-label="Font name" /><Chevron /></Combo>
            <Combo $w={107}><ComboSelect aria-label="Font size" /><Chevron /></Combo>
          </Cluster>
          <Cluster $gap={20}>
            <Tool name="Increase font size" icon={<GrowIcon />} />
            <Tool name="Decrease font size" icon={<ShrinkIcon />} />
          </Cluster>
          <Divider />
          <Tool name="Clear formatting" icon={<ClearIcon />} />
        </ToolRow>
        <ToolRow $left={27}>
          <Cluster $gap={20}>
            <Tool name="Bold" icon={<LetterIcon size={27} y={26} weight={700}>B</LetterIcon>} />
            <Tool name="Italic" icon={<LetterIcon size={30} y={25} style="italic" family={`"Liberation Serif", serif`}>I</LetterIcon>} />
            <Tool name="Underline" icon={<Svg><Glyph size={26} y={23}>U</Glyph><path d="M7 28h18" /></Svg>} />
            <Tool name="Strikethrough" icon={<Svg><Glyph size={24} y={25} weight={300}>ab</Glyph><path d="M0 19h32" /></Svg>} />
            <Tool name="Superscript" icon={<Svg><Glyph x={14} size={25} y={25} weight={500}>x</Glyph><Glyph x={27} size={14} y={10} weight={500} fill={c.blueDim}>2</Glyph></Svg>} />
            <Tool name="Subscript" icon={<Svg><Glyph x={14} size={25} y={25} weight={500}>x</Glyph><Glyph x={27} size={14} y={32} weight={500} fill={c.blueDim}>2</Glyph></Svg>} />
            <Tool name="Character spacing" menu icon={<CharSpaceIcon />} />
          </Cluster>
          <Tool name="Change case" menu icon={<LetterIcon size={27} y={26} weight={300}>Aa</LetterIcon>} />
          <Divider />
          <Tool name="Highlight" menu icon={<HighlightIcon />} />
          <Tool name="Font colour" menu icon={<FontColorIcon />} />
        </ToolRow>
      </Rows>
      <GroupLabel>Font</GroupLabel>
    </Group>
    <Group $w={654}>
      <GroupBody $left={27} $gap={16}>
        <Rows>
          <ToolRow>
            <Tool name="Bullets" menu icon={<BulletsIcon />} />
            <Tool name="Numbering" menu icon={<NumbersIcon />} />
            <Divider />
            <Cluster $gap={20}>
              <Tool name="Decrease indent" icon={<IndentIcon out />} />
              <Tool name="Increase indent" icon={<IndentIcon />} />
            </Cluster>
            <Divider />
            <Tool name="Line spacing" menu icon={<SpacingIcon />} />
            <Divider />
            <Tool name="Columns" menu icon={<ColumnsIcon />} />
          </ToolRow>
          <ToolRow>
            <Cluster $gap={20}>
              <Tool name="Align left" icon={<AlignIcon kind="l" />} />
              <Tool name="Align centre" icon={<AlignIcon kind="c" />} />
              <Tool name="Align right" icon={<AlignIcon kind="r" />} />
              <Tool name="Justify" icon={<AlignIcon kind="j" />} />
            </Cluster>
            <Divider />
            <Tool name="Text direction" menu icon={<DirectionIcon />} />
            <Tool name="Align text" menu icon={<AlignTextIcon />} />
          </ToolRow>
        </Rows>
        <BigTool dim icon={<SmartArtIcon />} label={["Convert to", "SmartArt"]} />
      </GroupBody>
      <GroupLabel>Paragraph</GroupLabel>
    </Group>
    <Group $w={214}>
      <GroupBody $left={16} $gap={10}>
        <BigTool icon={<PictureIcon />} label={["Picture"]} />
        <Rows>
          <Tool name="Shapes" menu="#fff" icon={<ShapesIcon />} />
          <Tool name="Text box" icon={<TextBoxIcon />} />
        </Rows>
      </GroupBody>
      <GroupLabel>Insert</GroupLabel>
    </Group>
    <Group $w={314}>
      <GroupBody $left={16}>
        <BigTool icon={<ArrangeIcon />} label={["Arrange"]} />
        <GroupBody $gap={10}>
          <BigTool dim icon={<QuickStylesIcon />} label={["Quick", "Styles"]} />
          <Rows>
            <Tool name="Shape fill" menu icon={<FillIcon />} />
            <Tool name="Shape outline" menu icon={<OutlineIcon />} />
          </Rows>
        </GroupBody>
      </GroupBody>
      <GroupLabel>Drawing</GroupLabel>
    </Group>
    <Group $w={154}>
      <GroupBody $center><BigTool dim icon={<SensitivityIcon />} label={["Sensitivity"]} /></GroupBody>
      <GroupLabel>Sensitivity</GroupLabel>
    </Group>
    <Group $w={130}>
      <GroupBody $center><BigTool menu={false} icon={<AddinsIcon />} label={["Add-ins"]} /></GroupBody>
      <GroupLabel>Add-ins</GroupLabel>
    </Group>
    <Group $w={152}>
      <GroupBody $center><BigTool menu={false} icon={<DesignerIcon />} label={["Designer"]} /></GroupBody>
      <GroupLabel>Assistance</GroupLabel>
    </Group>
  </RibbonBar>
);

const tabs = ["Home", "Insert", "Draw", "Design", "Transitions", "Animations", "Slide Show", "Record", "Review", "View"];

export default function App() {
  return (
    <Shell>
      <GlobalStyle />
      <TitleBar>
        <QuickAccess>
          <AutoSave>AutoSave<Toggle type="checkbox" role="switch" /></AutoSave>
          <IconButton aria-label="Home"><HomeIcon /></IconButton>
          <IconButton aria-label="Save"><SaveIcon /></IconButton>
          <IconButton $dim aria-label="Undo"><UndoIcon /><ThinChevron w={12} /></IconButton>
          <IconButton $dim aria-label="Redo"><RedoIcon /></IconButton>
          <IconButton aria-label="Save a copy"><SaveEditIcon /></IconButton>
          <IconButton aria-label="More"><DotsIcon /></IconButton>
        </QuickAccess>
        <DocTitle>
          <PptIcon />
          <DocName>Week 6.OVERVIEW OF REVENUE PLUS ACQUSITIONS.October 16.2024</DocName>
          <DocState>— Saved to my Mac</DocState>
          <ThinChevron w={16} />
        </DocTitle>
        <TitleRight>
          <SearchBox>
            <SearchIcon />
            <SearchInput type="search" placeholder="Search (Cmd + Ctrl + U)" aria-label="Search" />
          </SearchBox>
          <Presence aria-label="Share presence"><PresenceIcon /><PresenceDot /></Presence>
        </TitleRight>
      </TitleBar>
      <TabRow>
        <Tabs>{tabs.map((t, i) => <Tab key={t} href={`#${t}`} $on={i === 0}>{t}</Tab>)}</Tabs>
        <Actions>
          <Action><RecordIcon />Record</Action>
          <Action><CommentIcon />Comments</Action>
          <Action $primary><ShareIcon />Share<ThinChevron /></Action>
        </Actions>
      </TabRow>
      <Ribbon />
      <Workspace>
        <Sidebar>
          <ThumbList>
            {thumbs.map(({ n, Body, star }) => (
              <ThumbItem key={n}>
                <ThumbMeta><span>{n}</span>{star && <StarIcon />}</ThumbMeta>
                <Thumb href={`#slide-${n}`} $on={n === 53}><Backdrop /><Body /></Thumb>
              </ThumbItem>
            ))}
          </ThumbList>
        </Sidebar>
        <MainArea>
          <Stage>
            <Slide>
              <Backdrop />
              <SlideText>
                <SlideTitle>HOW BIG SHOULD YOUR SAMPLE BE?</SlideTitle>
                <SlideBody>
                  {bodyLines.map(([t, indent], i) => <SlideLine key={i} $indent={indent}>{t}</SlideLine>)}
                </SlideBody>
                <Footnote><FootnoteText /></Footnote>
              </SlideText>
            </Slide>
          </Stage>
          <Notes placeholder="Click to add notes" aria-label="Notes" />
        </MainArea>
      </Workspace>
      <StatusBar>
        <StatusSide $left>
          <span>Slide 53 of 59</span>
          <StatusButton>English (United States)</StatusButton>
          <StatusButton><AccessIcon />Accessibility: Investigate</StatusButton>
        </StatusSide>
        <StatusSide>
          <StatusButton $right={41}><NotesIcon />Notes</StatusButton>
          <StatusButton $right={20}><StatusCommentIcon />Comments</StatusButton>
          <ViewButton $on aria-label="Normal view"><NormalViewIcon /></ViewButton>
          <ViewButton aria-label="Slide sorter"><SorterIcon /></ViewButton>
          <ViewButton aria-label="Reading view"><ReadingIcon /></ViewButton>
          <ViewButton aria-label="Slide show"><PresentIcon /></ViewButton>
          <Zoom>
            <button aria-label="Zoom out"><Svg w={16} h={16} sw={4}><path d="M0 8h16" /></Svg></button>
            <ZoomRange type="range" min={0} max={100} defaultValue={52} aria-label="Zoom" />
            <button aria-label="Zoom in"><Svg w={16} h={16} sw={4}><path d="M0 8h16M8 0v16" /></Svg></button>
          </Zoom>
          <ZoomValue>116%</ZoomValue>
          <button aria-label="Fit slide to window"><FitIcon /></button>
        </StatusSide>
      </StatusBar>
    </Shell>
  );
}
